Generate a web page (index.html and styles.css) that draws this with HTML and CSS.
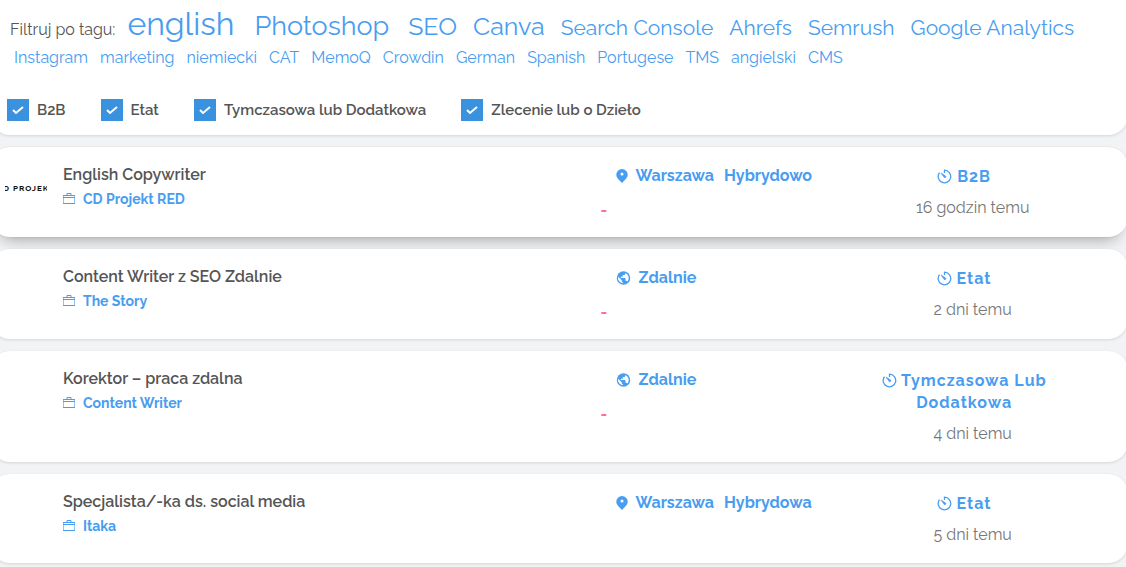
FILE: index.html
```
<!DOCTYPE html>
<html lang="pl">
	<head>
		<meta charset="utf-8">
		<meta name="viewport" content="width=device-width, initial-scale=1">
		<title>Oferty pracy</title>
		<link rel="stylesheet" href="styles.css">
	</head>
	<body>
		<!-- shared icons -->
		<svg class="sprite" aria-hidden="true">
			<symbol id="briefcase" viewBox="0 0 12 12">
				<path d="M0 2.500h12M0 4.500h12M0 10.500h12M4 2V.500h4V2" fill="none" stroke="currentColor"/>
				<path d="M.5 2v9M11.500 2v9" fill="none" stroke="currentColor" opacity=".6"/>
			</symbol>
			<symbol id="pin" viewBox="0 0 12 14">
				<path fill="currentColor" fill-rule="evenodd" d="M6 0a5.700 5.700 0 0 0-5.700 5.700C.3 9 3.500 11.200 6 14c2.500-2.800 5.700-5 5.700-8.300A5.700 5.700 0 0 0 6 0zm0 3.500a1.500 1.500 0 1 1 0 3 1.500 1.500 0 0 1 0-3z"/>
			</symbol>
			<symbol id="globe" viewBox="0 0 16 16">
				<circle cx="8" cy="8" r="7.700" fill="currentColor"/>
				<path fill="#fff" d="M2 6.500L6 10.500v1c0 .8.600 1.300 1.300 1.300v1.300A6 6 0 0 1 2 6.500zM10 2.300v.7c0 .8-.7 1.500-1.500 1.500H7.200V6c0 .4-.3.700-.8.700H5V8h4.500c.4 0 .8.400.8.800v2.200h.7c.7 0 1.200.4 1.400 1A6 6 0 0 0 10 2.300z"/>
			</symbol>
			<symbol id="timer" viewBox="0 0 15 15">
				<path d="M7.500 4V1.200a6.300 6.300 0 1 1-5 2.400" fill="none" stroke="currentColor" stroke-width="1.300"/>
				<path d="M4 4l4.600 3a1 1 0 0 1-1.300 1.500z" fill="currentColor" stroke="currentColor" stroke-width=".7"/>
			</symbol>
		</svg>

		<section class="filters">
			<div class="tags">
				<span class="tags-label">Filtruj po tagu:</span>
				<a class="tag xl" href="#">english</a>
				<a class="tag lg" href="#">Photoshop</a>
				<a class="tag md" href="#">SEO</a>
				<a class="tag md" href="#">Canva</a>
				<a class="tag sm" href="#">Search Console</a>
				<a class="tag sm" href="#">Ahrefs</a>
				<a class="tag sm" href="#">Semrush</a>
				<a class="tag sm" href="#">Google Analytics</a>
			</div>
			<div class="tags small">
				<a class="tag" href="#">Instagram</a>
				<a class="tag" href="#">marketing</a>
				<a class="tag" href="#">niemiecki</a>
				<a class="tag" href="#">CAT</a>
				<a class="tag" href="#">MemoQ</a>
				<a class="tag" href="#">Crowdin</a>
				<a class="tag" href="#">German</a>
				<a class="tag" href="#">Spanish</a>
				<a class="tag" href="#">Portugese</a>
				<a class="tag" href="#">TMS</a>
				<a class="tag" href="#">angielski</a>
				<a class="tag" href="#">CMS</a>
			</div>
			<form class="types">
				<label><input type="checkbox" checked> B2B</label>
				<label><input type="checkbox" checked> Etat</label>
				<label><input type="checkbox" checked> Tymczasowa lub Dodatkowa</label>
				<label><input type="checkbox" checked> Zlecenie lub o Dzieło</label>
			</form>
		</section>

		<ul class="jobs">
			<li class="job active">
				<div class="logo"><span>CD PROJEKT</span></div>
				<div class="info">
					<h3>English Copywriter</h3>
					<a class="company" href="#"><svg><use href="#briefcase"/></svg>CD Projekt RED</a>
				</div>
				<div class="place">
					<p class="location"><svg class="pin"><use href="#pin"/></svg><a href="#">Warszawa</a><a href="#">Hybrydowo</a></p>
					<p class="salary">-</p>
				</div>
				<div class="meta">
					<p class="type"><svg><use href="#timer"/></svg> B2B</p>
					<p class="date">16 godzin temu</p>
				</div>
			</li>
			<li class="job">
				<div class="logo"></div>
				<div class="info">
					<h3>Content Writer z SEO Zdalnie</h3>
					<a class="company" href="#"><svg><use href="#briefcase"/></svg>The Story</a>
				</div>
				<div class="place">
					<p class="location"><svg class="globe"><use href="#globe"/></svg><a href="#">Zdalnie</a></p>
					<p class="salary">-</p>
				</div>
				<div class="meta">
					<p class="type"><svg><use href="#timer"/></svg> Etat</p>
					<p class="date">2 dni temu</p>
				</div>
			</li>
			<li class="job">
				<div class="logo"></div>
				<div class="info">
					<h3>Korektor – praca zdalna</h3>
					<a class="company" href="#"><svg><use href="#briefcase"/></svg>Content Writer</a>
				</div>
				<div class="place">
					<p class="location"><svg class="globe"><use href="#globe"/></svg><a href="#">Zdalnie</a></p>
					<p class="salary">-</p>
				</div>
				<div class="meta">
					<p class="type"><svg><use href="#timer"/></svg> Tymczasowa Lub Dodatkowa</p>
					<p class="date">4 dni temu</p>
				</div>
			</li>
			<li class="job">
				<div class="logo"></div>
				<div class="info">
					<h3>Specjalista/-ka ds. social media</h3>
					<a class="company" href="#"><svg><use href="#briefcase"/></svg>Itaka</a>
				</div>
				<div class="place">
					<p class="location"><svg class="pin"><use href="#pin"/></svg><a href="#">Warszawa</a><a href="#">Hybrydowa</a></p>
				</div>
				<div class="meta">
					<p class="type"><svg><use href="#timer"/></svg> Etat</p>
					<p class="date">5 dni temu</p>
				</div>
			</li>
		</ul>
	</body>
</html>
```
FILE: styles.css
```
* {
	box-sizing: border-box;
}

body {
	margin: 0;
	background: #f2f3f5;
	color: #555;
	font: 16px/22px Raleway, Lato, sans-serif;
	overflow-x: hidden;
}

h3, p, ul {
	margin: 0;
	padding: 0;
}

a {
	color: #489df0;
	text-decoration: none;
}

.sprite {
	display: none;
}

.filters, .job {
	margin: 0 -2px 12px -10px;
	background: #fff;
	border-radius: 20px;
	box-shadow: 0 1px 3px rgba(0, 0, 0, .12);
}

.filters {
	padding: 7px 20px 14px 17px;
	border-radius: 0 0 20px 20px;
}

.tags {
	display: flex;
	flex-wrap: wrap;
	align-items: baseline;
	gap: 0 12px;
	padding-left: 3px;
	line-height: 34px;
}

.tags.small {
	padding-left: 7px;
	line-height: 22px;
}

.tags-label {
	margin-right: -5px;
}

.tag {
	white-space: nowrap;
}

.xl {
	margin: 0 3px 0 5px;
	font-size: 32px;
}

.lg {
	margin: 0 5px;
	font-size: 27px;
}

.md {
	margin: 0 2px;
	font-size: 25px;
}

.sm {
	margin: 0 2px;
	font-size: 21px;
}

.types {
	display: flex;
	flex-wrap: wrap;
	gap: 8px 35px;
	margin-top: 30px;
	font-size: 15px;
	font-weight: 600;
}

.types label {
	display: flex;
	align-items: center;
	gap: 8px;
}

.types input {
	appearance: none;
	width: 22px;
	height: 22px;
	margin: 0;
	background: #3a92de url("data:image/svg+xml,%3Csvg xmlns='http://www.w3.org/2000/svg' viewBox='0 0 22 22'%3E%3Cpath d='M6 11l3 3 7-6' fill='none' stroke='white' stroke-width='2'/%3E%3C/svg%3E");
}

.types input:not(:checked) {
	background: #ddd;
}

.jobs {
	list-style: none;
}

.job {
	display: grid;
	grid-template-columns: 42px 52fr 24fr 23fr;
	column-gap: 16px;
	padding: 17px 40px 17px 15px;
}

.job.active {
	box-shadow: 0 12px 16px -10px rgba(0, 0, 0, .35), 0 0 2px rgba(0, 0, 0, .12);
}

.logo {
	display: flex;
	justify-content: center;
	align-items: center;
	height: 48px;
	overflow: hidden;
	color: #111;
	font-size: 8px;
	font-weight: 700;
	letter-spacing: 1px;
	white-space: nowrap;
}

.info h3 {
	font-size: 16px;
	font-weight: 600;
}

.company {
	display: flex;
	align-items: center;
	gap: 8px;
	margin-top: 2px;
	font-size: 14px;
	font-weight: 700;
}

.company svg {
	width: 12px;
	height: 12px;
}

.location {
	display: flex;
	align-items: center;
	gap: 10px;
	padding: 1px 0 0 15px;
	color: #489df0;
	font-weight: 700;
}

.location svg {
	height: 14px;
}

.pin {
	width: 12px;
	margin-right: -2px;
}

.globe {
	width: 15px;
	margin-right: -2px;
}

.salary {
	margin-top: 15px;
	color: #ff7089;
	font-weight: 700;
	line-height: 18px;
}

.meta {
	padding-top: 2px;
	text-align: center;
}

.type {
	padding-right: 17px;
	color: #489df0;
	font-weight: 700;
	letter-spacing: 1px;
}

.type svg {
	width: 15px;
	height: 15px;
	vertical-align: -2px;
}

.date {
	margin-top: 9px;
	color: #777;
}
```
